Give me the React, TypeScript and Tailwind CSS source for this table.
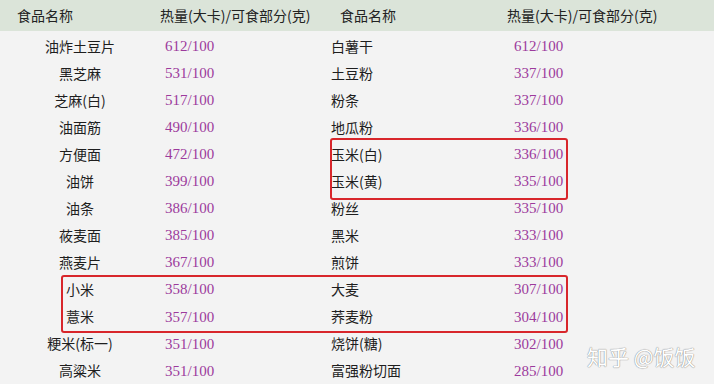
const left = [
  ["油炸土豆片", "612/100"],
  ["黑芝麻", "531/100"],
  ["芝麻(白)", "517/100"],
  ["油面筋", "490/100"],
  ["方便面", "472/100"],
  ["油饼", "399/100"],
  ["油条", "386/100"],
  ["莜麦面", "385/100"],
  ["燕麦片", "367/100"],
  ["小米", "358/100"],
  ["薏米", "357/100"],
  ["粳米(标一)", "351/100"],
  ["高粱米", "351/100"],
];

const right = [
  ["白薯干", "612/100"],
  ["土豆粉", "337/100"],
  ["粉条", "337/100"],
  ["地瓜粉", "336/100"],
  ["玉米(白)", "336/100"],
  ["玉米(黄)", "335/100"],
  ["粉丝", "335/100"],
  ["黑米", "333/100"],
  ["煎饼", "333/100"],
  ["大麦", "307/100"],
  ["荞麦粉", "304/100"],
  ["烧饼(糖)", "302/100"],
  ["富强粉切面", "285/100"],
];

const cjk = { fontFamily: '"Noto Sans CJK SC", sans-serif' };
const num = { fontFamily: '"Liberation Serif", "Noto Sans CJK SC", serif' };

export default function App() {
  return (
    <div className="flex h-[384px] w-[720px] overflow-hidden bg-white">
      <div className="relative w-[714px] bg-[#f3f3f3]">
        <div
          className="grid h-[31px] grid-cols-[160px_165px_180px_209px] items-center bg-[#dbe4d9] text-[14px] text-[#222]"
          style={cjk}
        >
          <div className="pl-[17px]">食品名称</div>
          <div className="pl-0 whitespace-nowrap">热量(大卡)/可食部分(克)</div>
          <div className="pl-[15px]">食品名称</div>
          <div className="pl-[2px] whitespace-nowrap">热量(大卡)/可食部分(克)</div>
        </div>
        <div className="pt-[1.5px]">
          {left.map((row, i) => (
            <div
              key={row[0]}
              className="grid h-[27.08px] grid-cols-[160px_165px_180px_209px] items-center"
            >
              <div className="text-center text-[14px] text-[#1e1e1e]" style={cjk}>
                {row[0]}
              </div>
              <div className="pl-[5px] text-[15px] text-[#9c3a9c]" style={num}>
                {row[1]}
              </div>
              <div className="pl-[6px] text-[14px] text-[#1e1e1e]" style={cjk}>
                {right[i][0]}
              </div>
              <div className="pl-[9px] text-[15px] text-[#9c3a9c]" style={num}>
                {right[i][1]}
              </div>
            </div>
          ))}
        </div>
        <div className="absolute left-[330px] top-[138px] h-[62px] w-[238px] rounded-[3px] border-2 border-[#d8262b]" />
        <div className="absolute left-[61px] top-[275px] h-[58px] w-[507px] rounded-[3px] border-2 border-[#d8262b]" />
        <div
          className="absolute left-[587px] top-[341px] text-[21px] text-white [text-shadow:0_0_1px_#8a8a8a,0_0_1px_#8a8a8a]"
          style={cjk}
        >
          知乎 @饭饭
        </div>
      </div>
    </div>
  );
}
